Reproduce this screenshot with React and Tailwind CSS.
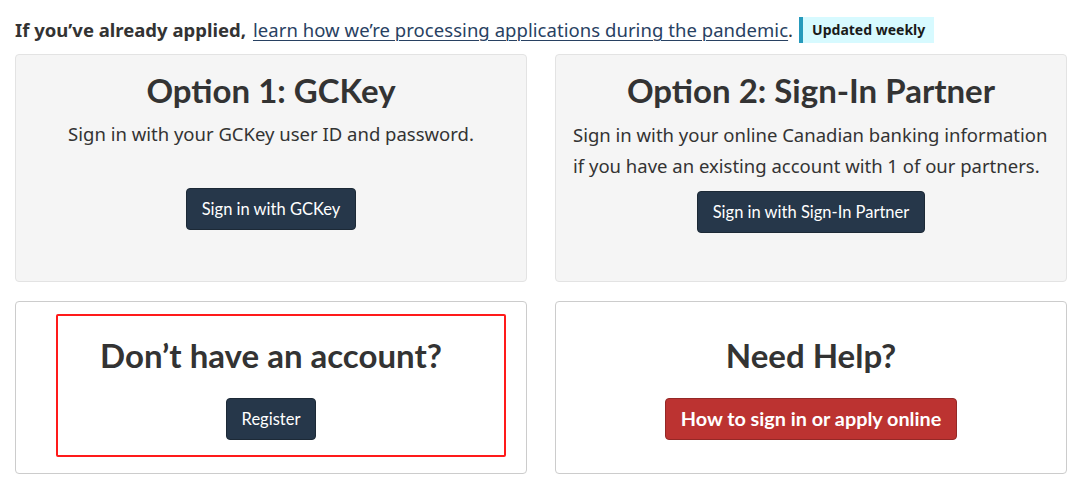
const Heading = ({ children }) => (
  <h2 className="font-['Lato',sans-serif] font-bold text-[33px] leading-[40px] text-[#333333]">
    {children}
  </h2>
);

const Btn = ({ children, red = false, className = '' }) => (
  <a
    href="#"
    className={`inline-block rounded-[4px] border px-[15px] font-['Lato',sans-serif] text-white ${
      red
        ? 'bg-[#bc3331] border-[#942826] font-bold text-[19.8px] h-[42px] leading-[38px]'
        : 'bg-[#26374a] border-[#1c2936] text-[16.5px] h-[42px] leading-[40px]'
    } ${className}`}
  >
    {children}
  </a>
);

export default function App() {
  return (
    <div className="w-[1080px] h-[490px] bg-white font-['Noto_Sans',sans-serif] text-[#333333] overflow-hidden">
      <div className="pl-[15px] pr-[13px] pt-[17px]">
        <p className="flex items-center h-[26px] text-[18.5px] leading-[26px]">
          <strong className="font-bold">If you’ve already applied,</strong>
          <span className="ml-[7px] tracking-[0.05px]">
            <a href="#" className="text-[#284162] underline underline-offset-[3px] decoration-1">
              learn how we’re processing applications during the pandemic
            </a>
            .
          </span>
          <span className="ml-[6px] h-[26px] flex items-center bg-[#d7faff] border-l-[4px] border-[#269abc] pl-[9px] pr-[9px] text-[14px] font-bold text-[#1a1a1a]">
            Updated weekly
          </span>
        </p>

        <div className="mt-[11px] grid grid-cols-2 gap-x-[28px] gap-y-[19px]">
          <div className="bg-[#f5f5f5] border border-[#e3e3e3] rounded-[4px] h-[228px] flex flex-col items-center pt-[15px] text-center">
            <Heading>Option 1: GCKey</Heading>
            <p className="mt-[9px] text-[18.5px] leading-[30px] text-[#333333]">
              Sign in with your GCKey user ID and password.
            </p>
            <Btn className="mt-[39px]">Sign in with GCKey</Btn>
          </div>

          <div className="bg-[#f5f5f5] border border-[#e3e3e3] rounded-[4px] h-[228px] flex flex-col items-center pt-[15px] text-center">
            <Heading>Option 2: Sign-In Partner</Heading>
            <p className="mt-[9px] pl-[17px] pr-[15px] text-[18.5px] leading-[31px] text-left text-[#333333]">
              Sign in with your online Canadian banking information if you have an existing account with 1 of our partners.
            </p>
            <Btn className="mt-[10px]">Sign in with Sign-In Partner</Btn>
          </div>

          <div className="relative bg-white border border-[#cccccc] rounded-[4px] h-[173px] flex flex-col items-center pt-[33px] text-center">
            <Heading>Don’t have an account?</Heading>
            <Btn className="mt-[23px]">Register</Btn>
            <div className="absolute left-[40px] right-[20px] top-[12px] bottom-[16px] border-[2px] border-[#ff1a1a] rounded-[2px]" />
          </div>

          <div className="bg-white border border-[#cccccc] rounded-[4px] h-[173px] flex flex-col items-center pt-[33px] text-center">
            <Heading>Need Help?</Heading>
            <Btn red className="mt-[23px]">How to sign in or apply online</Btn>
          </div>
        </div>
      </div>
    </div>
  );
}
